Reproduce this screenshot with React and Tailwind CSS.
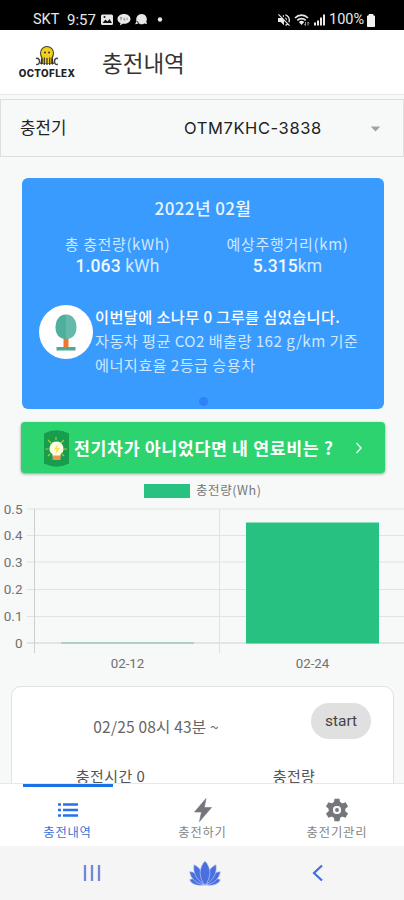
import { MdArrowDropDown, MdVolumeOff } from "react-icons/md"

const ticks = [
  { label: "0.5", y: 29 },
  { label: "0.4", y: 55.5 },
  { label: "0.3", y: 82 },
  { label: "0.2", y: 109.5 },
  { label: "0.1", y: 136.5 },
  { label: "0", y: 163 },
]

const gearTeeth = [0, 60, 120, 180, 240, 300]

function StatusBar() {
  return (
    <div className="h-[30px] bg-black text-[#e8e8e8] flex items-center pl-[33px] pr-[28px] pt-[10px] font-[Roboto] text-[14.500px] leading-none">
      <span className="w-[34px]">SKT</span>
      <span className="w-[34px] text-[15px]">9:57</span>
      <svg width="62" height="14" viewBox="0 0 62 14" className="shrink-0">
        <rect x="0" y="1.500" width="12" height="10.500" rx="1.500" fill="#e8e8e8" />
        <path d="M1.500 10l3-3.500 2 2 2-2.500 2.500 4z" fill="#111" />
        <circle cx="3.500" cy="4" r="1" fill="#111" />
        <path d="M23 1c-3.700 0-6.500 2.200-6.500 4.900 0 1.800 1.200 3.300 3 4.200l-.6 2.400 2.800-1.800 1.300.1c3.700 0 6.500-2.200 6.500-4.900S26.700 1 23 1z" fill="#e8e8e8" />
        <path d="M19 4.700h2m-1 0v2.500M23 4.700v2.300h1.200M26 4.700v2.300" stroke="#777" strokeWidth=".8" fill="none" />
        <path d="M40.500 1a5.200 5.200 0 0 1 4.800 7.500l.7 2.500-2.700-.5a5.200 5.200 0 0 1-5.500 0l-4 .8c1-.8 1.400-2 1.500-3.800A5.300 5.300 0 0 1 40.500 1z" fill="#e8e8e8" />
        <path d="M35.800 8a5 5 0 0 0 2.500 2.700" stroke="#111" fill="none" />
        <circle cx="59" cy="6.500" r="2.200" fill="#e8e8e8" />
      </svg>
      <div className="flex-1" />
      <MdVolumeOff size={16} className="mr-[2px] shrink-0" />
      <svg width="33" height="14" viewBox="0 0 33 14" className="mr-[2px] shrink-0">
        <path d="M1 5a9 9 0 0 1 13 0M3.300 7.300a6 6 0 0 1 8.400 0" stroke="#e8e8e8" strokeWidth="1.700" fill="none" />
        <path d="M4.800 9a4 4 0 0 1 5.400 0l-2.700 3z" fill="#e8e8e8" />
        <path d="M11.500 9v3.500m0 0l-1.200-1.400m3.700 1.400V9m0 0l1.200 1.400" stroke="#aaa" strokeWidth=".9" fill="none" />
        <path d="M20 9.500h2v3h-2zM23 7.500h2v5h-2zM26 4.500h2v8h-2zM29 1.500h2v11h-2z" fill="#e8e8e8" />
      </svg>
      <span className="text-[14.500px] w-[37px]">100%</span>
      <svg width="10" height="13" viewBox="0 0 10 13" className="shrink-0">
        <path d="M3 .5h4V2h1.500v10.500h-7V2H3z" fill="#f2f2f2" stroke="#f2f2f2" strokeLinejoin="round" />
      </svg>
    </div>
  )
}

function Logo() {
  return (
    <div className="w-[58px] flex flex-col items-center">
      <svg width="24" height="22" viewBox="0 0 24 22">
        <path d="M1 13.500c2-.7 3.500.7 3.500 3S3 20 1.200 19.300M23 13.500c-2-.7-3.500.7-3.500 3s1.500 3.500 3.300 2.800" stroke="#444" strokeWidth="1.500" fill="none" />
        <path d="M5 8a7 7 0 0 1 14 0c0 3-1.500 4.500-1.500 6.500l1.500 4.500h-14l1.500-4.500C6.500 12.500 5 11 5 8z" fill="#493d20" />
        <path d="M6 8a6 6 0 0 1 12 0c0 2.700-1.800 4-1.800 6.500v4H7.800v-4C7.800 12 6 10.700 6 8z" fill="#f0d01c" />
        <path d="M6.500 13.500v6M9.300 12.500v7.500M12 13v7M14.700 12.500v7.500M17.500 13.500v6" stroke="#333" strokeWidth="1.200" />
        <circle cx="10" cy="7.500" r="1" fill="#333" />
        <circle cx="14" cy="7.500" r="1" fill="#333" />
      </svg>
      <span className="font-[Inter] font-extrabold text-[9.800px] leading-[11px] tracking-[0.400px] text-[#222] whitespace-nowrap mt-px">OCTOFLEX</span>
    </div>
  )
}

function SummaryCard() {
  return (
    <section className="ml-[22px] w-[362px] h-[231px] bg-[#3a9bff] rounded-[6px] flex flex-col items-center text-[#cfe8ff]">
      <h2 className="mt-[18px] h-[24px] leading-[24px] text-[17px] font-medium tracking-[0.400px] text-[#e9f5ff]">2022년 02월</h2>
      <div className="mt-[13px] w-full flex">
        <div className="w-[191px] text-center">
          <p className="text-[15px] leading-[22px] tracking-[0.600px]">총 충전량(kWh)</p>
          <p className="text-[17.500px] leading-[23px] tracking-[0.100px] font-[Roboto]"><b className="font-medium text-[#eef8ff]">1.063</b> kWh</p>
        </div>
        <div className="w-[149px] text-center">
          <p className="text-[15px] leading-[22px] tracking-[0.700px] whitespace-nowrap">예상주행거리(km)</p>
          <p className="text-[17.500px] leading-[23px] tracking-[0.100px] font-[Roboto]"><b className="font-medium text-[#eef8ff]">5.315</b>km</p>
        </div>
      </div>
      <div className="mt-[25px] w-full flex pl-[17px]">
        <svg width="54" height="54" viewBox="0 0 54 54" className="mt-[2px] mr-[2px] shrink-0">
          <circle cx="27" cy="27" r="27" fill="#fff" />
          <path d="M24.500 31h5v13h-5z" fill="#f1762d" />
          <path d="M27 9.500c-7 0-10.500 6-10.500 13S20.500 34 27 34z" fill="#4daf9c" />
          <path d="M27 9.500c7 0 10.500 6 10.500 13S33.500 34 27 34z" fill="#65b9aa" />
          <path d="M17.500 42h19v3.500h-19z" fill="#4fa995" />
        </svg>
        <div className="mt-px text-[15.200px] leading-[24px] whitespace-nowrap">
          <p className="font-medium text-white tracking-[0.420px]">이번달에 소나무 0 그루를 심었습니다.</p>
          <p className="tracking-[0.430px]">자동차 평균 CO2 배출량 162 g/km 기준</p>
          <p className="tracking-[0.430px]">에너지효율 2등급 승용차</p>
        </div>
      </div>
      <span className="mt-[21px] size-[9px] rounded-full bg-[#2f80fb]" />
    </section>
  )
}

function FuelButton() {
  return (
    <button className="mt-[13px] ml-[21px] w-[364px] h-[51px] bg-[#2dd36f] rounded-[4px] shadow-[0_1px_3px_rgba(0,0,0,0.4)] flex items-center pl-[23px] text-white">
      <svg width="25" height="37" viewBox="0 0 25 37" className="mr-[5px] mt-[2px] shrink-0">
        <path d="M0 3.500Q12.500-3 25 3.500v30q-12.500 6.500-25 0z" fill="#189d4c" />
        <path d="M12 7v3M4 10l3 3M20 10l-3 3M1.500 19h3M20 19h3M4 26l2-2M20 26l-2-2" stroke="#a5cf38" strokeWidth="1.200" />
        <path d="M12.500 11.500a7 7 0 0 0-4 12.700v2.300h8v-2.300a7 7 0 0 0-4-12.700z" fill="#fffde5" />
        <path d="M14 13.500l-4 6h2.500l-1 4.500 4.500-6h-3z" fill="#f5e642" />
        <path d="M8.700 25.500h7.800v4.500H8.700z" fill="#ef9252" />
      </svg>
      <span className="text-[17.300px] font-bold tracking-[0.650px] whitespace-nowrap">전기차가 아니었다면 내 연료비는 ?</span>
      <svg width="8" height="12" viewBox="0 0 8 12" className="ml-auto mr-[22px] shrink-0">
        <path d="M1.500 1L6 6l-4.500 5" stroke="#d7ffe5" strokeWidth="1.600" fill="none" />
      </svg>
    </button>
  )
}

function UsageChart() {
  return (
    <svg width="404" height="206" viewBox="0 0 404 206" className="mt-[7px] block" fill="#707070">
      <rect x="144" y="4" width="46" height="14" fill="#27c281" />
      <text x="196" y="15" fontSize="12.500" fill="#777" textLength="65">충전량(Wh)</text>
      {ticks.map((t) => (
        <g key={t.label}>
          <path d={`M27 ${t.y}H404`} stroke={t.label === "0" ? "#ccd0cf" : "#e0e3e2"} />
          <text x="22.500" y={t.y + 4.500} textAnchor="end" fontFamily="Roboto" fontSize="13.500">{t.label}</text>
        </g>
      ))}
      <path d="M34.500 29v144" stroke="#cbcfce" />
      <path d="M219.500 29v144" stroke="#dfe2e1" />
      <path d="M61 163h133" stroke="#9fcabb" strokeWidth="1.500" />
      <rect x="246" y="42.500" width="133" height="121" fill="#27c281" />
      <text x="127.500" y="188" textAnchor="middle" fontFamily="Roboto" fontSize="13.300">02-12</text>
      <text x="312.500" y="188" textAnchor="middle" fontFamily="Roboto" fontSize="13.300">02-24</text>
    </svg>
  )
}

function SessionCard() {
  return (
    <section className="ml-[11px] w-[383px] h-[140px] bg-white border border-[#dfe2e1] rounded-[10px] text-[#666]">
      <div className="flex">
        <p className="w-[288px] pt-[28px] text-center text-[15.500px] leading-[22px] tracking-[0.200px]">02/25 08시 43분 ~</p>
        <span className="ml-[11px] mt-[16px] w-[60px] h-[36px] rounded-full bg-[#e0e0e0] text-[#444] font-[Roboto] text-[15.500px] leading-[36px] text-center">start</span>
      </div>
      <div className="mt-[28px] flex text-[15px] leading-[18px] text-[#555]">
        <p className="w-[197px] text-center tracking-[0.400px]">충전시간 0</p>
        <p className="w-[170px] text-center tracking-[0.400px]">충전량</p>
      </div>
    </section>
  )
}

function TabBar() {
  return (
    <nav className="h-[63px] shrink-0 bg-white border-t border-[#e8e8e8] grid grid-cols-[135px_135px_134px] text-[12.300px] leading-[16px] text-[#858585]">
      <div className="flex flex-col items-center text-[#3573d8]">
        <span className="w-[90px] h-[3px] bg-[#1b72e8]" />
        <svg width="20" height="14" viewBox="0 0 20 14" className="mt-[16px]">
          <path d="M0 1.500h3M5 1.500h15M0 7h3M5 7h15M0 12.500h3M5 12.500h15" stroke="#2474e5" strokeWidth="2.300" />
        </svg>
        <span className="mt-[7px] tracking-[0.800px]">충전내역</span>
      </div>
      <div className="flex flex-col items-center">
        <svg width="18" height="24" viewBox="0 0 18 24" className="mt-[14px]">
          <path d="M12 .5L.5 14h7L5.500 23.500 17.500 9.500h-7.200z" fill="#747679" stroke="#747679" strokeWidth=".6" strokeLinejoin="round" />
        </svg>
        <span className="mt-[2px] tracking-[0.800px]">충전하기</span>
      </div>
      <div className="flex flex-col items-center">
        <svg width="24" height="24" viewBox="-12 -12 24 24" className="mt-[14px]">
          {gearTeeth.map((angle) => (
            <path key={angle} d="M-3.200-7l.7-4.300h5L3.200-7z" fill="#747679" transform={`rotate(${angle})`} />
          ))}
          <circle r="6.200" fill="none" stroke="#747679" strokeWidth="4.400" />
          <circle r="4" fill="#f4f5f6" />
          <circle r="1.900" fill="#747679" />
        </svg>
        <span className="mt-[2px] tracking-[0.900px]">충전기관리</span>
      </div>
    </nav>
  )
}

function SystemNav() {
  return (
    <div className="h-[54px] shrink-0 bg-[#f5f5f5] flex items-center pl-[83px]">
      <svg width="18" height="18" viewBox="0 0 18 18">
        <path d="M2 1v16M9 1v16M16 1v16" stroke="#7188d6" strokeWidth="2.300" />
      </svg>
      <svg width="32" height="26" viewBox="0 0 32 26" className="ml-[88px]" fill="#4a70df" stroke="#c9d6fa" strokeWidth=".6">
        <path d="M16 25C8 26.500 2 24 .5 19.500 6 17.500 12 19.500 16 25zM16 25c8 1.500 14-1 15.500-5.500C26 17.500 20 19.500 16 25z" />
        <path d="M16 25C7 24 1.500 18.500.500 11.500 8 12 14 17 16 25zM16 25c9-1 14.500-6.500 15.500-13.500C24 12 18 17 16 25z" />
        <path d="M16 25C7 20 3.500 12 5 4.500 12 8 16 15 16 25zM16 25c9-5 12.500-13 11-20.500C20 8 16 15 16 25z" />
        <path d="M16 25.500c-6.500-8-6.500-18 0-24.500 6.500 6.500 6.500 16.500 0 24.500z" />
      </svg>
      <svg width="12" height="18" viewBox="0 0 12 18" className="ml-[91px]">
        <path d="M10 1.500L2 9l8 7.500" stroke="#3e6ee0" strokeWidth="2.200" fill="none" />
      </svg>
    </div>
  )
}

export default function App() {
  return (
    <div className="w-[404px] h-[900px] overflow-hidden flex flex-col bg-[#f6f9f8] font-['Noto_Sans_CJK_KR',sans-serif]">
      <StatusBar />
      <header className="h-[65px] bg-white border-b border-[#e7eaea] flex items-center pl-[18px]">
        <Logo />
        <h1 className="ml-[26px] text-[22.500px] leading-[32px] text-[#333]">충전내역</h1>
      </header>
      <div className="mt-[4px] h-[58px] border border-[#dcdfde] flex items-center pl-[19px] text-[#222]">
        <span className="text-[16.800px] w-[164px]">충전기</span>
        <span className="font-[Inter] text-[16.500px] tracking-[0.600px] whitespace-nowrap">OTM7KHC-3838</span>
        <MdArrowDropDown size={23} className="ml-auto mr-[16px] text-[#a0a3a2]" />
      </div>
      <main className="flex-1 min-h-0 overflow-hidden pt-[21px]">
        <SummaryCard />
        <FuelButton />
        <UsageChart />
        <SessionCard />
      </main>
      <TabBar />
      <SystemNav />
    </div>
  )
}
